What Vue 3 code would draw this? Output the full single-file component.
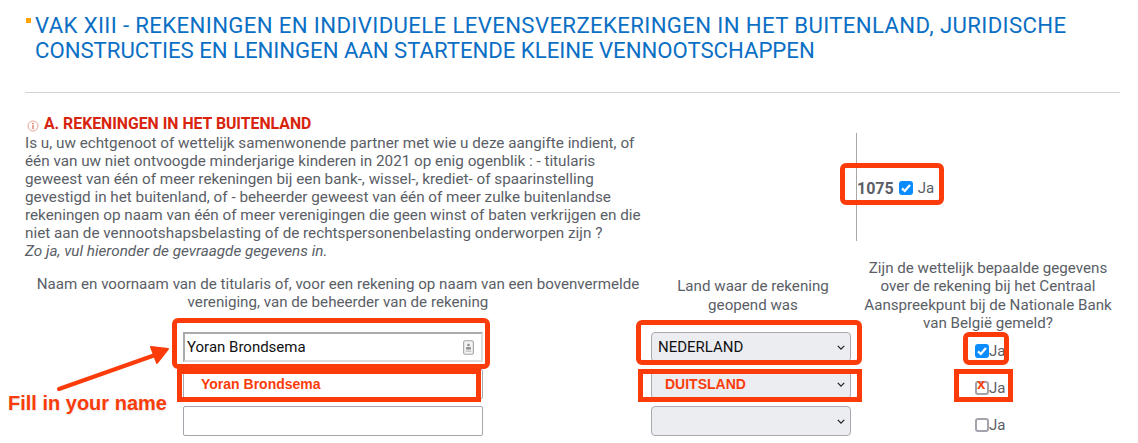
<script setup>
const rows = [
  { name: 'Yoran Brondsema', country: 'NEDERLAND', checked: true, icon: true },
  { name: '', country: '', checked: false, cross: true },
  { name: '', country: '', checked: false }
]
</script>

<template>
  <main class="page">
    <header class="title">
      <span class="bullet"></span>
      <h1><span class="l1">VAK XIII - REKENINGEN EN INDIVIDUELE LEVENSVERZEKERINGEN IN HET BUITENLAND, JURIDISCHE</span><span class="l2">CONSTRUCTIES EN LENINGEN AAN STARTENDE KLEINE VENNOOTSCHAPPEN</span></h1>
    </header>
    <hr class="rule">

    <section class="intro">
      <div class="question">
        <h2>
          <svg class="info" viewBox="0 0 12 12" width="12" height="12"><circle cx="6" cy="6" r="5" fill="none" stroke="#eaa79c" stroke-width="1"/><circle cx="6" cy="3.6" r=".8" fill="#d9654f"/><rect x="5.4" y="5" width="1.2" height="4" fill="#d9654f"/></svg>
          A. REKENINGEN IN HET BUITENLAND
        </h2>
        <p>
          Is u, uw echtgenoot of wettelijk samenwonende partner met wie u deze aangifte indient, of<br>
          één van uw niet ontvoogde minderjarige kinderen in 2021 op enig ogenblik : - titularis<br>
          geweest van één of meer rekeningen bij een bank-, wissel-, krediet- of spaarinstelling<br>
          gevestigd in het buitenland, of - beheerder geweest van één of meer zulke buitenlandse<br>
          rekeningen op naam van één of meer verenigingen die geen winst of baten verkrijgen en die<br>
          niet aan de vennootshapsbelasting of de rechtspersonenbelasting onderworpen zijn ?<br>
          <em>Zo ja, vul hieronder de gevraagde gegevens in.</em>
        </p>
      </div>
      <div class="answer">
        <strong>1075</strong>
        <span class="check on"><svg viewBox="0 0 14 14"><path d="M3 7.4 5.8 10 11 4" fill="none" stroke="#fff" stroke-width="2.2"/></svg></span>
        <span class="ja">Ja</span>
      </div>
    </section>

    <section class="table">
      <div class="head h1">Naam en voornaam van de titularis of, voor een rekening op naam van een bovenvermelde<br>vereniging, van de beheerder van de rekening</div>
      <div class="head h2">Land waar de rekening<br>geopend was</div>
      <div class="head h3">Zijn de wettelijk bepaalde gegevens<br>over de rekening bij het Centraal<br>Aanspreekpunt bij de Nationale Bank<br>van België gemeld?</div>

      <template v-for="(r, i) in rows" :key="i">
        <div class="field" :class="{ first: r.icon }">
          <span class="value">{{ r.name }}</span>
          <svg v-if="r.icon" class="contact" viewBox="0 0 12 16"><rect x=".7" y=".7" width="10.6" height="14.6" rx="1.5" fill="#f3f3f3" stroke="#a5a5a5" stroke-width="1.2"/><circle cx="6" cy="5.2" r="1.4" fill="#8a8a8a"/><rect x="3.4" y="7.6" width="5.2" height="2.6" fill="#8a8a8a"/><rect x="3" y="11.4" width="6" height="1.2" fill="#b5b5b5"/></svg>
        </div>
        <div class="select">
          <span>{{ r.country }}</span>
          <svg viewBox="0 0 10 6" width="8" height="5"><path d="M1 1 5 5 9 1" fill="none" stroke="#222" stroke-width="1.6"/></svg>
        </div>
        <div class="reported">
          <span class="check" :class="{ on: r.checked, off: !r.checked }">
            <svg v-if="r.checked" viewBox="0 0 14 14"><path d="M3 7.4 5.8 10 11 4" fill="none" stroke="#fff" stroke-width="2.2"/></svg>
          </span>
          <span class="ja">Ja</span>
          <span v-if="r.cross" class="cross">x</span>
        </div>
      </template>
    </section>

    <div class="mark round m-answer"></div>
    <div class="mark round m-name"></div>
    <div class="mark round m-land"></div>
    <div class="mark round m-check"></div>
    <div class="mark m-name2"></div>
    <div class="mark m-land2"></div>
    <div class="mark m-check2"></div>
    <span class="note n-name">Yoran Brondsema</span>
    <span class="note n-land">DUITSLAND</span>
    <span class="fill">Fill in your name</span>
    <svg class="arrow" viewBox="0 0 1138 443" width="1138" height="443">
      <path d="M59 389 158 354" fill="none" stroke="#fb3c0a" stroke-width="4" stroke-linecap="round"/>
      <path d="M151 347 168 349 157 363Z" fill="#fb3c0a" stroke="#fb3c0a" stroke-width="2" stroke-linejoin="round"/>
    </svg>
  </main>
</template>

<style scoped>
.page {
  position: relative;
  width: 1138px;
  height: 443px;
  overflow: hidden;
  box-sizing: border-box;
  padding: 13px 18px 0 25px;
  background: #fff;
  color: #5a5e66;
  font-family: Roboto, "Liberation Sans", sans-serif;
}
.title { display: flex; gap: 4px; }
.bullet { width: 5px; height: 5px; margin: 5px 0 0 1px; background: #ffa400; flex: none; }
h1 {
  margin: 0;
  font-size: 22.2px;
  line-height: 25px;
  font-weight: 400;
  color: #0b6fc4;
  white-space: nowrap;
}
.l1, .l2 { display: block; }
.l1 { letter-spacing: .36px; }
.l2 { letter-spacing: -.04px; }
.rule { margin: 29px 0 0; border: 0; border-top: 1px solid #d2d2d2; }
.intro {
  display: grid;
  grid-template-columns: 831px 1fr;
  height: 141px;
  margin-top: 21px;
}
h2 {
  display: flex;
  align-items: center;
  gap: 5px;
  margin: 0;
  padding-left: 2px;
  font-size: 15.8px;
  line-height: 20px;
  font-weight: 700;
  color: #d8230d;
}
.info { flex: none; margin-top: 3px; }
p {
  margin: 0;
  font-size: 15.25px;
  line-height: 18px;
  color: #5a5e66;
  white-space: nowrap;
}
em { font-style: italic; }
.answer {
  display: flex;
  align-items: center;
  gap: 5px;
  height: 108px;
  margin-top: 19px;
  padding-top: 2px;
  border-left: 1px solid #a8a8a8;
  box-sizing: border-box;
}
.answer strong { font-size: 16px; font-weight: 700; }
.ja { font-size: 15px; line-height: 15px; }
.check {
  display: block;
  box-sizing: border-box;
  width: 14px;
  height: 14px;
  border-radius: 3px;
  flex: none;
}
.check svg { display: block; width: 14px; height: 14px; }
.check.on { background: #0a8cff; }
.check.off { border: 2px solid #a3a3ad; }
.table {
  display: grid;
  grid-template-columns: 626px 200px 274px;
  grid-template-rows: 70px repeat(3, 30px);
  row-gap: 7px;
}
.table .head {
  align-self: center;
  text-align: center;
  font-size: 15.15px;
  line-height: 18.3px;
  white-space: nowrap;
}
.table .h1 { padding-top: 6px; }
.table .h2 { padding: 11px 0 0 4px; }
.table .h3 { padding-top: 11px; }
.field {
  display: flex;
  align-items: center;
  justify-content: space-between;
  box-sizing: border-box;
  width: 300px;
  margin-left: 158px;
  padding: 0 7px 0 3px;
  border: 1px solid #a5a5ae;
  border-radius: 2px;
  color: #111;
  font-size: 15px;
}
.field.first { border: 2px solid #aaa; border-bottom-color: #ddd; border-right-color: #ddd; border-radius: 0; padding-left: 2px; }
.contact { width: 11px; height: 15px; flex: none; }
.select {
  display: flex;
  align-items: center;
  justify-content: space-between;
  box-sizing: border-box;
  padding: 0 5px 0 6px;
  border: 1px solid #a9a9b1;
  border-radius: 4px;
  background: #ecedf1;
  color: #111;
  font-size: 15px;
}
.reported {
  position: relative;
  display: flex;
  align-items: center;
  padding: 8px 0 0 124px;
}
.cross {
  position: absolute;
  left: 126px;
  top: 7px;
  font: 700 15px/15px "Liberation Sans", sans-serif;
  color: #fb3c0a;
}
.mark { position: absolute; box-sizing: border-box; border: 5px solid #fb3c0a; }
.round { border-radius: 6px; }
.m-answer { left: 840px; top: 163px; width: 104px; height: 42px; }
.m-name { left: 172px; top: 318px; width: 318px; height: 51px; }
.m-land { left: 636px; top: 320px; width: 226px; height: 45px; }
.m-check { left: 963px; top: 332px; width: 46px; height: 33px; }
.m-name2 { left: 177px; top: 369px; width: 304px; height: 33px; }
.m-land2 { left: 638px; top: 369px; width: 224px; height: 33px; }
.m-check2 { left: 954px; top: 369px; width: 59px; height: 33px; }
.note {
  position: absolute;
  top: 376px;
  font: 700 14px/16px "Liberation Sans", sans-serif;
  color: #fb3c0a;
}
.n-name { left: 201px; }
.n-land { left: 665px; }
.fill {
  position: absolute;
  left: 8px;
  top: 392px;
  font: 700 20px/22px "Liberation Sans", sans-serif;
  color: #fb3c0a;
  text-shadow: 0 1px 2px rgba(0,0,0,.15);
}
.arrow { position: absolute; left: 0; top: 0; pointer-events: none; }
</style>
